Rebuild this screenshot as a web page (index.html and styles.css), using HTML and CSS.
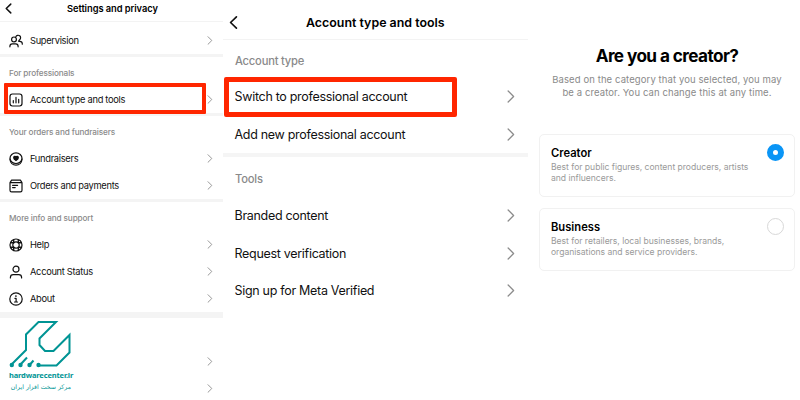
FILE: index.html
```html
<!DOCTYPE html>
<html lang="en">
<head>
    <meta charset="UTF-8">
    <meta name="viewport" content="width=device-width, initial-scale=1.0">
    <title>Settings and privacy</title>
    <link rel="stylesheet" href="styles.css">
</head>
<body>
    <svg width="0" height="0" class="sprite">
        <symbol id="chevron" viewBox="0 0 6 10">
            <path d="M0.8 0.8L5 5L0.8 9.2"/>
        </symbol>
        <symbol id="back" viewBox="0 0 8 12">
            <path d="M6.6 1L1.4 6L6.6 11"/>
        </symbol>
    </svg>

    <div class="container">
        <!-- Settings -->
        <section class="settings">
            <header>
                <svg class="back"><use href="#back"/></svg>
                <h1>Settings and privacy</h1>
            </header>
            <div class="row first">
                <svg class="icon" viewBox="0 0 14 14">
                    <circle cx="5" cy="5.4" r="2.4"/>
                    <path d="M.9 12.800v-.6c0-1.700 1.100-2.400 2.400-2.400h3.400c1.400 0 2.400.8 2.400 2.400v.6M6.900 2.600a2.500 2.500 0 1 1 3.800 3.100c-.6.5-1 .8-1 1.600h1c1.500 0 2.600.9 2.600 2.500v.4"/>
                </svg>
                <span>Supervision</span>
                <svg class="chevron"><use href="#chevron"/></svg>
            </div>

            <div class="group">
                <h2>For professionals</h2>
                <div class="row">
                    <svg class="icon" viewBox="0 0 14 14">
                        <rect x="1" y="1" width="12" height="12" rx="2.4"/>
                        <path d="M4.3 7.6v2.2M7 4.4v5.400M9.700 6.400v3.400"/>
                    </svg>
                    <span>Account type and tools</span>
                    <svg class="chevron"><use href="#chevron"/></svg>
                    <div class="highlight"></div>
                </div>
            </div>

            <div class="group">
                <h2>Your orders and fundraisers</h2>
                <div class="row">
                    <svg class="icon" viewBox="0 0 14 14">
                        <ellipse cx="7" cy="6.200" rx="6" ry="5.300"/>
                        <path d="M1 7.200c.2 3.600 2.800 5.900 6 5.900s5.800-2.300 6-5.900"/>
                        <path class="solid" d="M7 8.600C5.500 7.600 4.700 6.800 4.700 5.700c0-1.400 1.700-1.800 2.300-.5.6-1.300 2.300-.9 2.300.5C9.300 6.800 8.500 7.600 7 8.600z"/>
                    </svg>
                    <span>Fundraisers</span>
                    <svg class="chevron"><use href="#chevron"/></svg>
                </div>
                <div class="row">
                    <svg class="icon" viewBox="0 0 14 14">
                        <path d="M1 3.600h12v7.600a1.600 1.600 0 0 1-1.600 1.600H2.600A1.600 1.600 0 0 1 1 11.200zM1 3.600L2.600 1.200h8.800L13 3.600M3.600 6.300h5M3.600 8.600h2.600"/>
                    </svg>
                    <span>Orders and payments</span>
                    <svg class="chevron"><use href="#chevron"/></svg>
                </div>
            </div>

            <div class="group">
                <h2>More info and support</h2>
                <div class="row">
                    <svg class="icon" viewBox="0 0 14 14">
                        <circle cx="7" cy="7" r="6"/>
                        <circle cx="7" cy="7" r="3.200"/>
                        <path class="thick" d="M2.400 4.700h2.400M2.400 9.300h2.400M9.200 4.700h2.400M9.200 9.300h2.400M4.700 2.400v2.400M9.300 2.400v2.400M4.700 9.200v2.400M9.300 9.200v2.400"/>
                    </svg>
                    <span>Help</span>
                    <svg class="chevron"><use href="#chevron"/></svg>
                </div>
                <div class="row">
                    <svg class="icon" viewBox="0 0 14 14">
                        <circle cx="7" cy="4.200" r="3"/>
                        <path d="M1.400 13v-.6c0-1.700 1.200-2.800 2.900-2.800h5.400c1.700 0 2.900 1.100 2.900 2.800v.6"/>
                    </svg>
                    <span>Account Status</span>
                    <svg class="chevron"><use href="#chevron"/></svg>
                </div>
                <div class="row">
                    <svg class="icon" viewBox="0 0 14 14">
                        <circle cx="7" cy="7" r="6.200"/>
                        <path d="M5.900 6.300H7.100V10M5.500 10h3"/>
                        <circle class="solid" cx="6.900" cy="4.100" r=".3"/>
                    </svg>
                    <span>About</span>
                    <svg class="chevron"><use href="#chevron"/></svg>
                </div>
            </div>

            <div class="footer">
                <div class="logo">
                    <svg viewBox="0 0 62 48">
                        <path d="M2.500 45L17 30.500V15L29.500 2.500H47L30.500 19v6.500l5.500 6h8.500L60.500 15.500V33L47.500 46H29.500"/>
                        <path d="M11.500 45l6.500-7M21 45l3.500-4"/>
                        <circle cx="2.800" cy="45.500" r="2.200"/>
                        <circle cx="11.500" cy="45.500" r="2.200"/>
                        <circle cx="20.500" cy="45.500" r="2.200"/>
                        <circle cx="29.500" cy="45.500" r="2.200"/>
                    </svg>
                    <div class="site">hardwarecenter.ir</div>
                    <div class="slogan" lang="fa" dir="rtl">مرکز سخت افزار ایران</div>
                </div>
                <div class="more">
                    <div class="row"><svg class="chevron"><use href="#chevron"/></svg></div>
                    <div class="row"><svg class="chevron"><use href="#chevron"/></svg></div>
                </div>
            </div>
        </section>

        <!-- Account type and tools -->
        <section class="account">
            <header>
                <svg class="back"><use href="#back"/></svg>
                <h1>Account type and tools</h1>
            </header>
            <h2>Account type</h2>
            <div class="row">
                <span>Switch to professional account</span>
                <svg class="chevron"><use href="#chevron"/></svg>
                <div class="highlight"></div>
            </div>
            <div class="row">
                <span>Add new professional account</span>
                <svg class="chevron"><use href="#chevron"/></svg>
            </div>
            <div class="group">
                <h2>Tools</h2>
                <div class="row">
                    <span>Branded content</span>
                    <svg class="chevron"><use href="#chevron"/></svg>
                </div>
                <div class="row">
                    <span>Request verification</span>
                    <svg class="chevron"><use href="#chevron"/></svg>
                </div>
                <div class="row">
                    <span>Sign up for Meta Verified</span>
                    <svg class="chevron"><use href="#chevron"/></svg>
                </div>
            </div>
        </section>

        <!-- Creator or business -->
        <section class="creator">
            <h1>Are you a creator?</h1>
            <p class="intro">Based on the category that you selected, you may<br>be a creator. You can change this at any time.</p>
            <div class="card">
                <div>
                    <h3>Creator</h3>
                    <p>Best for public figures, content producers, artists<br>and influencers.</p>
                </div>
                <span class="radio selected"></span>
            </div>
            <div class="card">
                <div>
                    <h3>Business</h3>
                    <p>Best for retailers, local businesses, brands,<br>organisations and service providers.</p>
                </div>
                <span class="radio"></span>
            </div>
        </section>
    </div>
</body>
</html>
```
FILE: styles.css
```css
* {
    margin: 0;
    padding: 0;
    box-sizing: border-box;
}
body {
    background-color: white;
    color: #111;
    font-family: 'Inter', 'Liberation Sans', sans-serif;
    overflow: hidden;
}
svg {
    flex: none;
    fill: none;
    stroke: #111;
    stroke-linecap: round;
    stroke-linejoin: round;
}
.sprite {
    display: block;
}
.container {
    display: flex;
    width: 800px;
    height: 400px;
}
header {
    display: flex;
    align-items: center;
    border-bottom: 1px solid #f3f3f3;
}
h1 {
    font-weight: 600;
    color: #000;
    white-space: nowrap;
}
h2 {
    display: flex;
    align-items: center;
    font-weight: 500;
    color: #8a8a8a;
    white-space: nowrap;
}
.row {
    position: relative;
    display: flex;
    align-items: center;
    white-space: nowrap;
}
.chevron {
    margin-left: auto;
    stroke: #8c8c8c;
}
.highlight {
    position: absolute;
    border: solid #ff2600;
    border-radius: 1px;
}

/* Settings */
.settings {
    width: 223px;
}
.settings header {
    height: 22px;
    padding: 0 0 5px 5px;
}
.settings .back {
    width: 7px;
    height: 11px;
    stroke-width: 1.7;
}
.settings h1 {
    margin-left: 55px;
    font-size: 9.3px;
    letter-spacing: -0.05px;
}
.settings h2 {
    height: 29px;
    padding: 3px 0 0 9px;
    font-size: 8.2px;
    letter-spacing: -0.12px;
}
.settings .row {
    height: 27px;
    padding: 0 10px 0 9px;
    font-size: 9.3px;
    letter-spacing: -0.3px;
}
.settings .first {
    height: 32px;
    padding-top: 5px;
}
.settings .chevron {
    width: 6px;
    height: 9px;
}
.settings .group {
    border-top: 3px solid #f4f4f4;
}
.settings .highlight {
    left: 4px;
    top: -3px;
    width: 202px;
    height: 31px;
    border-width: 4px;
}
.icon {
    width: 14px;
    height: 14px;
    margin-right: 7px;
    stroke-width: 1.2;
}
.icon .solid {
    fill: #111;
}
.icon .thick {
    stroke-width: 1.4;
}
.footer {
    display: flex;
    height: 88px;
    border-top: 6px solid #f4f4f4;
}
.logo {
    width: 62px;
    margin-left: 9px;
    padding-top: 1px;
    color: #009494;
    white-space: nowrap;
}
.logo svg {
    display: block;
    width: 62px;
    height: 49px;
    stroke: #009494;
    stroke-width: 2;
    stroke-linecap: butt;
    stroke-linejoin: miter;
}
.logo circle {
    fill: #009494;
    stroke: none;
}
.site {
    margin-top: 2px;
    font: 700 7.5px/11px 'Noto Sans', sans-serif;
    letter-spacing: -0.15px;
}
.slogan {
    font: 6.2px/11px 'DejaVu Sans', sans-serif;
}
.more {
    flex: 1;
    padding-top: 30px;
}

/* Account type and tools */
.account {
    width: 305px;
}
.account header {
    height: 40px;
    padding: 5px 0 0 6px;
}
.account .back {
    width: 9px;
    height: 15px;
    stroke-width: 1.5;
}
.account h1 {
    margin-left: 68px;
    font-size: 12.4px;
}
.account h2 {
    height: 38px;
    padding: 4px 0 0 12px;
    font-size: 11.2px;
    letter-spacing: -0.22px;
}
.account .row {
    height: 37.5px;
    padding: 0 13px 0 11.5px;
    font-size: 12.5px;
    letter-spacing: -0.3px;
}
.account .chevron {
    width: 8px;
    height: 13px;
}
.account .group {
    border-top: 4px solid #f5f5f5;
}
.account .group h2 {
    height: 40px;
}
.account .highlight {
    left: 1px;
    top: -1px;
    width: 233px;
    height: 40px;
    border-width: 5px;
    border-radius: 2px;
}

/* Creator or business */
.creator {
    width: 272px;
    padding: 44px 5px 0 11px;
}
.creator h1 {
    font-size: 17.2px;
    line-height: 24px;
    font-weight: 700;
    letter-spacing: -0.6px;
    text-align: center;
}
.intro {
    margin: 6px 0 35px;
    font-size: 9.5px;
    line-height: 12.5px;
    letter-spacing: 0.1px;
    color: #8a8a8a;
    text-align: center;
    white-space: nowrap;
}
.card {
    display: flex;
    justify-content: space-between;
    height: 63px;
    margin-bottom: 11px;
    padding: 9px 10px 0 11px;
    border: 1px solid #f1f1f1;
    border-radius: 5px;
}
.card h3 {
    font-size: 11.2px;
    line-height: 18px;
    font-weight: 600;
    color: #000;
}
.card p {
    font-size: 8.6px;
    line-height: 11px;
    letter-spacing: -0.03px;
    color: #9a9a9a;
    white-space: nowrap;
}
.radio {
    width: 17px;
    height: 17px;
    border: 1px solid #d8d8d8;
    border-radius: 50%;
}
.radio.selected {
    border: 6px solid #0a95f6;
}
```
